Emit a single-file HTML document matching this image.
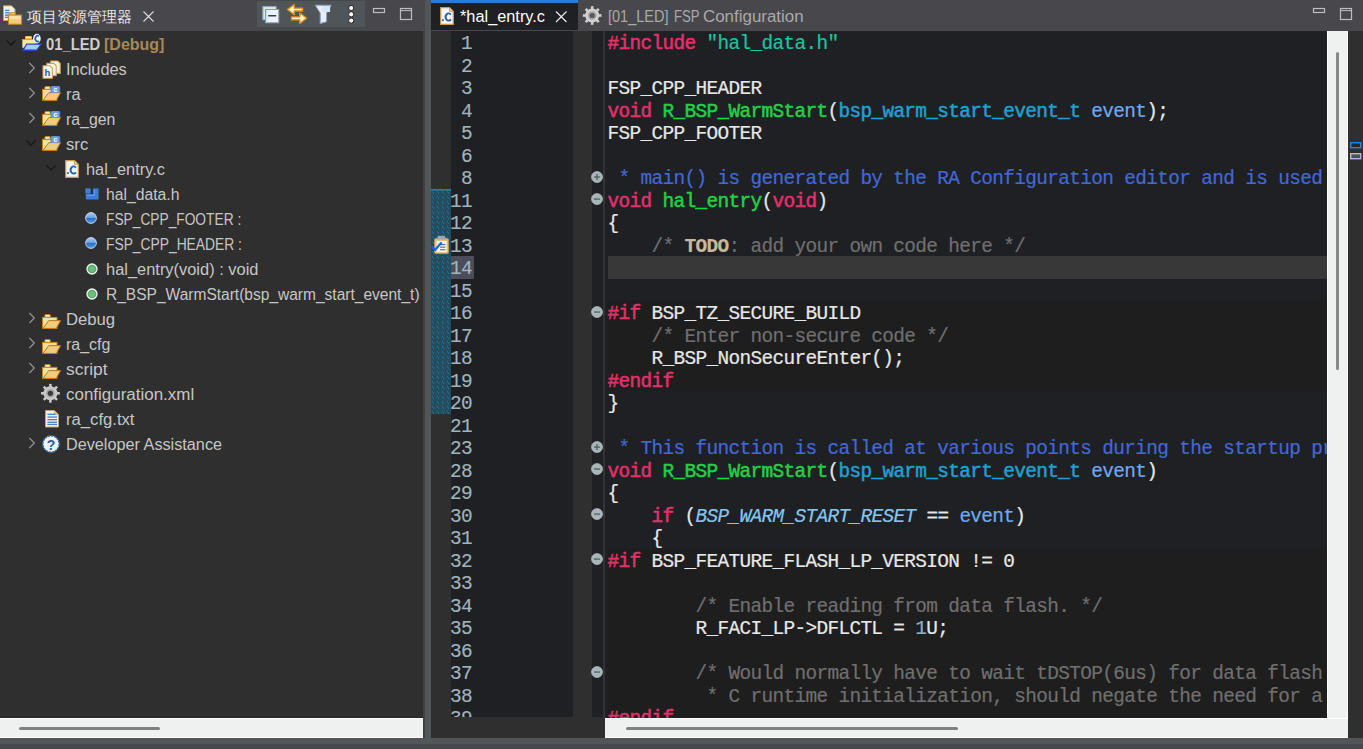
<!DOCTYPE html>
<html><head><meta charset="utf-8"><style>
html,body{margin:0;padding:0;width:1363px;height:749px;overflow:hidden;background:#48484c;}
body{position:relative;font-family:"Liberation Sans",sans-serif;}
.t{position:absolute;white-space:pre;}
.code{font-family:"Liberation Mono",monospace;font-size:19.4px;letter-spacing:-0.6417px;-webkit-text-stroke:0.2px currentColor;}
.b{-webkit-text-stroke:0.5px currentColor;}
</style></head><body>
<div style="position:absolute;left:0px;top:0px;width:1363px;height:749px;background:#48484c;"></div>
<div style="position:absolute;left:0px;top:31px;width:423px;height:687px;background:#2f2f2f;"></div>
<div style="position:absolute;left:0px;top:717px;width:423px;height:1px;background:#262626;"></div>
<div style="position:absolute;left:0px;top:718px;width:423px;height:20px;background:#eff1f0;border-top:1px solid #fff;border-bottom:1px solid #fff;box-sizing:border-box;"></div>
<div style="position:absolute;left:19px;top:727px;width:141px;height:3px;background:#808080;border-radius:2px;"></div>
<div style="position:absolute;left:423px;top:31px;width:2px;height:707px;background:#3e4043;"></div>
<div style="position:absolute;left:425px;top:0px;width:6px;height:738px;background:#515659;"></div>
<div style="position:absolute;left:0px;top:738px;width:1363px;height:6px;background:#515659;"></div>
<div style="position:absolute;left:431px;top:31px;width:932px;height:707px;background:#2f2f2f;"></div>
<div style="position:absolute;left:451px;top:31px;width:122px;height:686px;background:#1f2023;"></div>
<div style="position:absolute;left:592px;top:31px;width:11px;height:686px;background:#1f2023;"></div>
<div style="position:absolute;left:603px;top:31px;width:2px;height:686px;background:#343434;"></div>
<div style="position:absolute;left:605px;top:31px;width:722px;height:687px;background:#1f2023;"></div>
<div style="position:absolute;left:608px;top:301.0px;width:719px;height:90.0px;background:#1e1e1e;"></div>
<div style="position:absolute;left:608px;top:548.5px;width:719px;height:169.5px;background:#1e1e1e;"></div>
<div style="position:absolute;left:608px;top:256.0px;width:719px;height:22.5px;background:#383838;"></div>
<div style="position:absolute;left:451px;top:256.0px;width:23px;height:22.5px;background:#4b4d5a;"></div>
<svg style="position:absolute;left:431px;top:188.5px;" width="20" height="225.0" viewBox="0 0 20 225.0"><defs><pattern id="qd" x="0" y="0.5" width="5" height="5" patternUnits="userSpaceOnUse"><rect width="5" height="5" fill="#214f60"/><rect x="1" y="2" width="1" height="1" fill="#1d8fb4"/><rect x="2" y="3" width="1" height="1" fill="#1d8fb4"/><rect x="2" y="2" width="1" height="1" fill="#2a3358"/><rect x="1" y="3" width="1" height="1" fill="#2a3358"/><rect x="4" y="0" width="1" height="1" fill="#2a4a5e"/><rect x="3" y="4" width="1" height="1" fill="#2a4a5e"/></pattern></defs><rect width="20" height="225.0" fill="url(#qd)"/><rect width="20" height="1.6" fill="#1f86a8"/></svg>
<div style="position:absolute;left:1327px;top:31px;width:21px;height:707px;background:#eff1f0;border-left:1px solid #fff;border-right:1px solid #fff;box-sizing:border-box;"></div>
<div style="position:absolute;left:605px;top:718px;width:743px;height:20px;background:#eff1f0;border-top:1px solid #fff;border-bottom:1px solid #fff;box-sizing:border-box;"></div>
<div style="position:absolute;left:1336px;top:52px;width:3px;height:318px;background:#888;border-radius:2px;"></div>
<div style="position:absolute;left:626px;top:727px;width:332px;height:3px;background:#808080;border-radius:2px;"></div>
<svg style="position:absolute;left:1349px;top:141px" width="14" height="20" viewBox="0 0 14 20"><rect x="1.7" y="1.7" width="10" height="5" fill="#1b2b36" stroke="#2a84dc" stroke-width="1.4"/><rect x="1.7" y="12.7" width="10" height="5" fill="#4c5252" stroke="#bab4dc" stroke-width="1.4"/></svg>
<div style="position:absolute;left:431px;top:0px;width:147px;height:3px;background:#2b7bd6;"></div>
<div style="position:absolute;left:431px;top:3px;width:147px;height:27px;background:#1f2023;"></div>
<div style="position:absolute;left:605px;top:31px;width:722px;height:687px;overflow:hidden;"><div style="position:absolute;left:-605px;top:-31px;width:1363px;height:749px;"><div class="t code" style="left:607.5px;top:33.0px;height:22.5px;line-height:22.5px;"><span class="b" style="color:#e4306a;">#include</span><span style="color:#e8e8e8;"> </span><span style="color:#1cc3a0;">&quot;hal_data.h&quot;</span></div>
<div class="t code" style="left:607.5px;top:55.5px;height:22.5px;line-height:22.5px;"></div>
<div class="t code" style="left:607.5px;top:78.0px;height:22.5px;line-height:22.5px;"><span style="color:#e8e8e8;">FSP_CPP_HEADER</span></div>
<div class="t code" style="left:607.5px;top:100.5px;height:22.5px;line-height:22.5px;"><span class="b" style="color:#e4306a;">void</span><span style="color:#e8e8e8;"> </span><span class="b" style="color:#1ed246;">R_BSP_WarmStart</span><span style="color:#e8e8e8;">(</span><span class="b" style="color:#1ea0d0;">bsp_warm_start_event_t</span><span style="color:#e8e8e8;"> </span><span style="color:#6eaaf5;">event</span><span style="color:#e8e8e8;">);</span></div>
<div class="t code" style="left:607.5px;top:123.0px;height:22.5px;line-height:22.5px;"><span style="color:#e8e8e8;">FSP_CPP_FOOTER</span></div>
<div class="t code" style="left:607.5px;top:145.5px;height:22.5px;line-height:22.5px;"></div>
<div class="t code" style="left:607.5px;top:168.0px;height:22.5px;line-height:22.5px;"><span style="color:#4169d6;"> * main() is generated by the RA Configuration editor and is used to generate threads if an RTOS is used.</span></div>
<div class="t code" style="left:607.5px;top:190.5px;height:22.5px;line-height:22.5px;"><span class="b" style="color:#e4306a;">void</span><span style="color:#e8e8e8;"> </span><span class="b" style="color:#1ed246;">hal_entry</span><span style="color:#e8e8e8;">(</span><span class="b" style="color:#e4306a;">void</span><span style="color:#e8e8e8;">)</span></div>
<div class="t code" style="left:607.5px;top:213.0px;height:22.5px;line-height:22.5px;"><span style="color:#e8e8e8;">{</span></div>
<div class="t code" style="left:607.5px;top:235.5px;height:22.5px;line-height:22.5px;"><span style="color:#6f6f6f;">    /* </span><span style="color:#c9b99c;font-weight:bold;">TODO</span><span style="color:#6f6f6f;">: add your own code here */</span></div>
<div class="t code" style="left:607.5px;top:258.0px;height:22.5px;line-height:22.5px;"></div>
<div class="t code" style="left:607.5px;top:280.5px;height:22.5px;line-height:22.5px;"></div>
<div class="t code" style="left:607.5px;top:303.0px;height:22.5px;line-height:22.5px;"><span class="b" style="color:#e4306a;">#if</span><span style="color:#e8e8e8;"> BSP_TZ_SECURE_BUILD</span></div>
<div class="t code" style="left:607.5px;top:325.5px;height:22.5px;line-height:22.5px;"><span style="color:#6f6f6f;">    /* Enter non-secure code */</span></div>
<div class="t code" style="left:607.5px;top:348.0px;height:22.5px;line-height:22.5px;"><span style="color:#e8e8e8;">    R_BSP_NonSecureEnter();</span></div>
<div class="t code" style="left:607.5px;top:370.5px;height:22.5px;line-height:22.5px;"><span class="b" style="color:#e4306a;">#endif</span></div>
<div class="t code" style="left:607.5px;top:393.0px;height:22.5px;line-height:22.5px;"><span style="color:#e8e8e8;">}</span></div>
<div class="t code" style="left:607.5px;top:415.5px;height:22.5px;line-height:22.5px;"></div>
<div class="t code" style="left:607.5px;top:438.0px;height:22.5px;line-height:22.5px;"><span style="color:#4169d6;"> * This function is called at various points during the startup process.  This implementation uses the event</span></div>
<div class="t code" style="left:607.5px;top:460.5px;height:22.5px;line-height:22.5px;"><span class="b" style="color:#e4306a;">void</span><span style="color:#e8e8e8;"> </span><span class="b" style="color:#1ed246;">R_BSP_WarmStart</span><span style="color:#e8e8e8;">(</span><span class="b" style="color:#1ea0d0;">bsp_warm_start_event_t</span><span style="color:#e8e8e8;"> </span><span style="color:#6eaaf5;">event</span><span style="color:#e8e8e8;">)</span></div>
<div class="t code" style="left:607.5px;top:483.0px;height:22.5px;line-height:22.5px;"><span style="color:#e8e8e8;">{</span></div>
<div class="t code" style="left:607.5px;top:505.5px;height:22.5px;line-height:22.5px;"><span style="color:#e8e8e8;">    </span><span class="b" style="color:#e4306a;">if</span><span style="color:#e8e8e8;"> (</span><span style="color:#86c6ee;font-style:italic;">BSP_WARM_START_RESET</span><span style="color:#e8e8e8;"> == </span><span style="color:#6eaaf5;">event</span><span style="color:#e8e8e8;">)</span></div>
<div class="t code" style="left:607.5px;top:528.0px;height:22.5px;line-height:22.5px;"><span style="color:#e8e8e8;">    {</span></div>
<div class="t code" style="left:607.5px;top:550.5px;height:22.5px;line-height:22.5px;"><span class="b" style="color:#e4306a;">#if</span><span style="color:#e8e8e8;"> BSP_FEATURE_FLASH_LP_VERSION != 0</span></div>
<div class="t code" style="left:607.5px;top:573.0px;height:22.5px;line-height:22.5px;"></div>
<div class="t code" style="left:607.5px;top:595.5px;height:22.5px;line-height:22.5px;"><span style="color:#6f6f6f;">        /* Enable reading from data flash. */</span></div>
<div class="t code" style="left:607.5px;top:618.0px;height:22.5px;line-height:22.5px;"><span style="color:#e8e8e8;">        R_FACI_LP-&gt;DFLCTL = </span><span style="color:#8eaec0;">1</span><span style="color:#e8e8e8;">U;</span></div>
<div class="t code" style="left:607.5px;top:640.5px;height:22.5px;line-height:22.5px;"></div>
<div class="t code" style="left:607.5px;top:663.0px;height:22.5px;line-height:22.5px;"><span style="color:#6f6f6f;">        /* Would normally have to wait tDSTOP(6us) for data flash recovery. Placing the enable here, before</span></div>
<div class="t code" style="left:607.5px;top:685.5px;height:22.5px;line-height:22.5px;"><span style="color:#6f6f6f;">         * C runtime initialization, should negate the need for a delay since the initialization will typically take more than 6us.</span></div>
<div class="t code" style="left:607.5px;top:708.0px;height:22.5px;line-height:22.5px;"><span class="b" style="color:#e4306a;">#endif</span></div>
</div></div>
<div style="position:absolute;left:451px;top:31px;width:122px;height:686px;overflow:hidden;"><div style="position:absolute;left:-451px;top:-31px;width:1363px;height:749px;"><div class="t code" style="-webkit-text-stroke:0.15px currentColor;left:400px;width:72px;text-align:right;top:33.0px;height:22.5px;line-height:22.5px;color:#a0b4bc;">1</div>
<div class="t code" style="-webkit-text-stroke:0.15px currentColor;left:400px;width:72px;text-align:right;top:55.5px;height:22.5px;line-height:22.5px;color:#a0b4bc;">2</div>
<div class="t code" style="-webkit-text-stroke:0.15px currentColor;left:400px;width:72px;text-align:right;top:78.0px;height:22.5px;line-height:22.5px;color:#a0b4bc;">3</div>
<div class="t code" style="-webkit-text-stroke:0.15px currentColor;left:400px;width:72px;text-align:right;top:100.5px;height:22.5px;line-height:22.5px;color:#a0b4bc;">4</div>
<div class="t code" style="-webkit-text-stroke:0.15px currentColor;left:400px;width:72px;text-align:right;top:123.0px;height:22.5px;line-height:22.5px;color:#a0b4bc;">5</div>
<div class="t code" style="-webkit-text-stroke:0.15px currentColor;left:400px;width:72px;text-align:right;top:145.5px;height:22.5px;line-height:22.5px;color:#a0b4bc;">6</div>
<div class="t code" style="-webkit-text-stroke:0.15px currentColor;left:400px;width:72px;text-align:right;top:168.0px;height:22.5px;line-height:22.5px;color:#a0b4bc;">8</div>
<div class="t code" style="-webkit-text-stroke:0.15px currentColor;left:400px;width:72px;text-align:right;top:190.5px;height:22.5px;line-height:22.5px;color:#a0b4bc;">11</div>
<div class="t code" style="-webkit-text-stroke:0.15px currentColor;left:400px;width:72px;text-align:right;top:213.0px;height:22.5px;line-height:22.5px;color:#a0b4bc;">12</div>
<div class="t code" style="-webkit-text-stroke:0.15px currentColor;left:400px;width:72px;text-align:right;top:235.5px;height:22.5px;line-height:22.5px;color:#a0b4bc;">13</div>
<div class="t code" style="-webkit-text-stroke:0.15px currentColor;left:400px;width:72px;text-align:right;top:258.0px;height:22.5px;line-height:22.5px;color:#a0b4bc;">14</div>
<div class="t code" style="-webkit-text-stroke:0.15px currentColor;left:400px;width:72px;text-align:right;top:280.5px;height:22.5px;line-height:22.5px;color:#a0b4bc;">15</div>
<div class="t code" style="-webkit-text-stroke:0.15px currentColor;left:400px;width:72px;text-align:right;top:303.0px;height:22.5px;line-height:22.5px;color:#a0b4bc;">16</div>
<div class="t code" style="-webkit-text-stroke:0.15px currentColor;left:400px;width:72px;text-align:right;top:325.5px;height:22.5px;line-height:22.5px;color:#a0b4bc;">17</div>
<div class="t code" style="-webkit-text-stroke:0.15px currentColor;left:400px;width:72px;text-align:right;top:348.0px;height:22.5px;line-height:22.5px;color:#a0b4bc;">18</div>
<div class="t code" style="-webkit-text-stroke:0.15px currentColor;left:400px;width:72px;text-align:right;top:370.5px;height:22.5px;line-height:22.5px;color:#a0b4bc;">19</div>
<div class="t code" style="-webkit-text-stroke:0.15px currentColor;left:400px;width:72px;text-align:right;top:393.0px;height:22.5px;line-height:22.5px;color:#a0b4bc;">20</div>
<div class="t code" style="-webkit-text-stroke:0.15px currentColor;left:400px;width:72px;text-align:right;top:415.5px;height:22.5px;line-height:22.5px;color:#a0b4bc;">21</div>
<div class="t code" style="-webkit-text-stroke:0.15px currentColor;left:400px;width:72px;text-align:right;top:438.0px;height:22.5px;line-height:22.5px;color:#a0b4bc;">23</div>
<div class="t code" style="-webkit-text-stroke:0.15px currentColor;left:400px;width:72px;text-align:right;top:460.5px;height:22.5px;line-height:22.5px;color:#a0b4bc;">28</div>
<div class="t code" style="-webkit-text-stroke:0.15px currentColor;left:400px;width:72px;text-align:right;top:483.0px;height:22.5px;line-height:22.5px;color:#a0b4bc;">29</div>
<div class="t code" style="-webkit-text-stroke:0.15px currentColor;left:400px;width:72px;text-align:right;top:505.5px;height:22.5px;line-height:22.5px;color:#a0b4bc;">30</div>
<div class="t code" style="-webkit-text-stroke:0.15px currentColor;left:400px;width:72px;text-align:right;top:528.0px;height:22.5px;line-height:22.5px;color:#a0b4bc;">31</div>
<div class="t code" style="-webkit-text-stroke:0.15px currentColor;left:400px;width:72px;text-align:right;top:550.5px;height:22.5px;line-height:22.5px;color:#a0b4bc;">32</div>
<div class="t code" style="-webkit-text-stroke:0.15px currentColor;left:400px;width:72px;text-align:right;top:573.0px;height:22.5px;line-height:22.5px;color:#a0b4bc;">33</div>
<div class="t code" style="-webkit-text-stroke:0.15px currentColor;left:400px;width:72px;text-align:right;top:595.5px;height:22.5px;line-height:22.5px;color:#a0b4bc;">34</div>
<div class="t code" style="-webkit-text-stroke:0.15px currentColor;left:400px;width:72px;text-align:right;top:618.0px;height:22.5px;line-height:22.5px;color:#a0b4bc;">35</div>
<div class="t code" style="-webkit-text-stroke:0.15px currentColor;left:400px;width:72px;text-align:right;top:640.5px;height:22.5px;line-height:22.5px;color:#a0b4bc;">36</div>
<div class="t code" style="-webkit-text-stroke:0.15px currentColor;left:400px;width:72px;text-align:right;top:663.0px;height:22.5px;line-height:22.5px;color:#a0b4bc;">37</div>
<div class="t code" style="-webkit-text-stroke:0.15px currentColor;left:400px;width:72px;text-align:right;top:685.5px;height:22.5px;line-height:22.5px;color:#a0b4bc;">38</div>
<div class="t code" style="-webkit-text-stroke:0.15px currentColor;left:400px;width:72px;text-align:right;top:708.0px;height:22.5px;line-height:22.5px;color:#a0b4bc;">39</div>
</div></div>
<div class="t" style="left:46px;top:33px;height:24px;line-height:24px;font-size:16px;font-weight:bold;color:#cfcfcf;transform:scaleX(0.925);transform-origin:0 0;">01_LED</div>
<div class="t" style="left:104px;top:33px;height:24px;line-height:24px;font-size:16px;font-weight:bold;color:#a8875a;">[Debug]</div>
<div class="t" style="left:66px;top:58px;height:24px;line-height:24px;font-size:16px;color:#c6c6c6;transform:scaleX(1.0191);transform-origin:0 0;">Includes</div>
<div class="t" style="left:66px;top:83px;height:24px;line-height:24px;font-size:16px;color:#c6c6c6;transform:scaleX(1.0210);transform-origin:0 0;">ra</div>
<div class="t" style="left:66px;top:108px;height:24px;line-height:24px;font-size:16px;color:#c6c6c6;transform:scaleX(0.9911);transform-origin:0 0;">ra_gen</div>
<div class="t" style="left:66px;top:133px;height:24px;line-height:24px;font-size:16px;color:#c6c6c6;transform:scaleX(1.0437);transform-origin:0 0;">src</div>
<div class="t" style="left:86px;top:158px;height:24px;line-height:24px;font-size:16px;color:#c6c6c6;transform:scaleX(1.0240);transform-origin:0 0;">hal_entry.c</div>
<div class="t" style="left:106px;top:183px;height:24px;line-height:24px;font-size:16px;color:#c6c6c6;transform:scaleX(0.9819);transform-origin:0 0;">hal_data.h</div>
<div class="t" style="left:106px;top:208px;height:24px;line-height:24px;font-size:16px;color:#c6c6c6;transform:scaleX(0.8591);transform-origin:0 0;">FSP_CPP_FOOTER :</div>
<div class="t" style="left:106px;top:233px;height:24px;line-height:24px;font-size:16px;color:#c6c6c6;transform:scaleX(0.8635);transform-origin:0 0;">FSP_CPP_HEADER :</div>
<div class="t" style="left:106px;top:258px;height:24px;line-height:24px;font-size:16px;color:#c6c6c6;transform:scaleX(1.0264);transform-origin:0 0;">hal_entry(void) : void</div>
<div class="t" style="left:106px;top:283px;height:24px;line-height:24px;font-size:16px;color:#c6c6c6;transform:scaleX(0.9705);transform-origin:0 0;">R_BSP_WarmStart(bsp_warm_start_event_t)</div>
<div class="t" style="left:66px;top:308px;height:24px;line-height:24px;font-size:16px;color:#c6c6c6;transform:scaleX(1.0424);transform-origin:0 0;">Debug</div>
<div class="t" style="left:66px;top:333px;height:24px;line-height:24px;font-size:16px;color:#c6c6c6;transform:scaleX(0.9984);transform-origin:0 0;">ra_cfg</div>
<div class="t" style="left:66px;top:358px;height:24px;line-height:24px;font-size:16px;color:#c6c6c6;transform:scaleX(1.0861);transform-origin:0 0;">script</div>
<div class="t" style="left:66px;top:383px;height:24px;line-height:24px;font-size:16px;color:#c6c6c6;transform:scaleX(1.0598);transform-origin:0 0;">configuration.xml</div>
<div class="t" style="left:66px;top:408px;height:24px;line-height:24px;font-size:16px;color:#c6c6c6;transform:scaleX(1.0402);transform-origin:0 0;">ra_cfg.txt</div>
<div class="t" style="left:66px;top:433px;height:24px;line-height:24px;font-size:16px;color:#c6c6c6;transform:scaleX(1.0140);transform-origin:0 0;">Developer Assistance</div>
<div class="t" style="left:460px;top:5px;height:24px;line-height:24px;font-size:16px;color:#ffffff;transform:scaleX(1.02);transform-origin:0 0;">*hal_entry.c</div>
<div class="t" style="left:607.8000000000001px;top:5px;height:24px;line-height:24px;font-size:16px;color:#a9a9a9;transform:scaleX(0.9076);transform-origin:0 0;">[01_LED]</div>
<div class="t" style="left:673.8000000000001px;top:5px;height:24px;line-height:24px;font-size:16px;color:#a9a9a9;transform:scaleX(0.8198);transform-origin:0 0;">FSP</div>
<div class="t" style="left:703.2px;top:5px;height:24px;line-height:24px;font-size:16px;color:#a9a9a9;transform:scaleX(1.0570);transform-origin:0 0;">Configuration</div>
<div class="t" style="left:27px;top:5px;height:24px;line-height:24px;font-size:15px;color:#e6e6e6;">项目资源管理器</div>
<svg style="position:absolute;left:0px;top:0px;" width="24" height="26" viewBox="0 0 24 26"><path d="M3.5,5.8 H11.5 L15,9.3 V20.5 H3.5 Z" fill="#eef2f8" stroke="#c8a060" stroke-width="1"/><rect x="5" y="9.700000000000001" width="4.6" height="1.4" fill="#4f86d0"/><rect x="5" y="12.100000000000001" width="4.6" height="1.4" fill="#4f86d0"/><rect x="5" y="14.5" width="4.6" height="1.4" fill="#4f86d0"/><rect x="5" y="16.7" width="4.6" height="1.4" fill="#4f86d0"/><rect x="9.6" y="12.6" width="5.6" height="3" rx="0.6" fill="#f0c36c" stroke="#c0832a" stroke-width="0.8"/><rect x="8.4" y="15" width="13.2" height="9.2" fill="#f3cd78" stroke="#bf842c" stroke-width="1"/><rect x="9.4" y="16" width="11.2" height="3.2" fill="#f8e0a4"/></svg>
<svg style="position:absolute;left:142px;top:10px;" width="13" height="13" viewBox="0 0 13 13"><path d="M1.5,1.5 L11.5,11.5 M11.5,1.5 L1.5,11.5" stroke="#dcdcdc" stroke-width="1.1"/></svg>
<div style="position:absolute;left:257px;top:1px;width:108px;height:26px;background:#50555a;"></div>
<svg style="position:absolute;left:257.8px;top:0px;" width="24" height="26" viewBox="0 0 24 26"><rect x="4.9" y="6.6" width="13.2" height="13.2" fill="#dde6f0" stroke="#9aa8bc" stroke-width="1"/><rect x="7.5" y="9.5" width="13.3" height="13.3" fill="#eef1f4" stroke="#8a9ab2" stroke-width="1"/><rect x="8" y="10" width="1.4" height="12.4" fill="#b8ecf8"/><rect x="10" y="14.9" width="8.4" height="1.7" rx="0.8" fill="#1c3c94"/></svg>
<svg style="position:absolute;left:0px;top:0px;" width="320" height="28" viewBox="0 0 320 28"><path d="M287.5,9.6 L294.2,4.5 V8.2 H302.6 V11 H294.2 V14.8 Z" fill="#fff3c4" stroke="#d8901e" stroke-width="1.3" stroke-linejoin="round"/><path d="M306.6,18.3 L299.8,12.8 V16.9 H291.4 V19.8 H299.8 V23.6 Z" fill="#fff3c4" stroke="#d8901e" stroke-width="1.3" stroke-linejoin="round"/></svg>
<svg style="position:absolute;left:0px;top:0px;" width="340" height="28" viewBox="0 0 340 28"><path d="M315.2,5.2 H331.2 L326.6,13 V21.8 L320.2,23.6 V13 Z" fill="#e6eef8" stroke="#8a9ab4" stroke-width="1"/><rect x="322.6" y="6" width="7.5" height="6" fill="#d6e6f6"/></svg>
<svg style="position:absolute;left:0px;top:0px;" width="360" height="28" viewBox="0 0 360 28"><circle cx="351.2" cy="8" r="2.6" fill="#ffffff" stroke="#202020" stroke-width="1"/><circle cx="351.2" cy="14.3" r="2.6" fill="#ffffff" stroke="#202020" stroke-width="1"/><circle cx="351.2" cy="20.6" r="2.6" fill="#ffffff" stroke="#202020" stroke-width="1"/></svg>
<svg style="position:absolute;left:372px;top:7px;" width="14" height="8" viewBox="0 0 14 8"><rect x="1.5" y="1.5" width="11" height="4" fill="none" stroke="#bdbdbd" stroke-width="1.2"/></svg>
<svg style="position:absolute;left:399px;top:7px;" width="14" height="14" viewBox="0 0 14 14"><rect x="1.5" y="1.5" width="11" height="11" fill="none" stroke="#bdbdbd" stroke-width="1.2"/><line x1="1.5" y1="3.6" x2="12.5" y2="3.6" stroke="#bdbdbd" stroke-width="1"/></svg>
<svg style="position:absolute;left:1312px;top:7px;" width="14" height="8" viewBox="0 0 14 8"><rect x="1.5" y="1.5" width="11" height="4" fill="none" stroke="#bdbdbd" stroke-width="1.2"/></svg>
<svg style="position:absolute;left:1339px;top:7px;" width="14" height="14" viewBox="0 0 14 14"><rect x="1.5" y="1.5" width="11" height="11" fill="none" stroke="#bdbdbd" stroke-width="1.2"/><line x1="1.5" y1="3.6" x2="12.5" y2="3.6" stroke="#bdbdbd" stroke-width="1"/></svg>
<svg style="position:absolute;left:440px;top:7px;" width="14" height="18" viewBox="0 0 14 18"><path d="M0.7,0.7 H9.5 L13.3,4.5 V17.3 H0.7 Z" fill="#f4f6fa" stroke="#c89b50" stroke-width="1.2"/><path d="M9.5,0.7 V4.5 H13.3" fill="#e8c890" stroke="#c89b50" stroke-width="0.8"/><path d="M10.9,7.6 A3,3.6 0 1 0 10.9,12.4" fill="none" stroke="#2a62a4" stroke-width="1.9"/><rect x="2" y="12.2" width="1.9" height="1.7" fill="#2a62a4"/></svg>
<svg style="position:absolute;left:554px;top:10px;" width="14" height="14" viewBox="0 0 14 14"><path d="M2,1.5 L12.5,12 M12.5,1.5 L2,12" stroke="#f0f0f0" stroke-width="1.1"/></svg>
<svg style="position:absolute;left:0px;top:0px;" width="610" height="31" viewBox="0 0 610 31"><g transform="translate(592.2,15.5)"><rect x="-1.3" y="-9.3" width="2.6" height="9.3" fill="#cfcfcf" transform="rotate(0.0)"/><rect x="-1.3" y="-9.3" width="2.6" height="9.3" fill="#cfcfcf" transform="rotate(45.0)"/><rect x="-1.3" y="-9.3" width="2.6" height="9.3" fill="#cfcfcf" transform="rotate(90.0)"/><rect x="-1.3" y="-9.3" width="2.6" height="9.3" fill="#cfcfcf" transform="rotate(135.0)"/><rect x="-1.3" y="-9.3" width="2.6" height="9.3" fill="#cfcfcf" transform="rotate(180.0)"/><rect x="-1.3" y="-9.3" width="2.6" height="9.3" fill="#cfcfcf" transform="rotate(225.0)"/><rect x="-1.3" y="-9.3" width="2.6" height="9.3" fill="#cfcfcf" transform="rotate(270.0)"/><rect x="-1.3" y="-9.3" width="2.6" height="9.3" fill="#cfcfcf" transform="rotate(315.0)"/><circle r="7.0" fill="#cfcfcf"/><circle r="4.2" fill="#a4a4a4"/><circle r="2.6" fill="#5a5a5a"/></g></svg>
<svg style="position:absolute;left:4.5px;top:39px;" width="12" height="8" viewBox="0 0 12 8"><polyline points="1.5,1.5 6,6 10.5,1.5" fill="none" stroke="#161616" stroke-width="1.3"/></svg>
<svg style="position:absolute;left:21px;top:33px;" width="22" height="19" viewBox="0 0 22 19"><rect x="4" y="3" width="7" height="3.6" rx="1" fill="#eab35a"/><rect x="5" y="3.8" width="5" height="1.3" fill="#fff8e0"/><rect x="1.5" y="6.6" width="13" height="8" fill="#fbe6a8" stroke="#d8b070" stroke-width="0.6"/><polygon points="5.6,11.2 20.2,11.2 15.6,17.4 2,17.4" fill="#9fd2f4" stroke="#2a4ac8" stroke-width="1.2"/><rect x="2" y="16.6" width="13.6" height="1.5" fill="#2c3cc0"/><ellipse cx="15.9" cy="5.6" rx="3.8" ry="4.9" fill="#f4f8fc"/><path d="M17.8,3.3 A2.2,2.9 0 1 0 17.8,7.9" fill="none" stroke="#2a66b8" stroke-width="1.8"/></svg>
<svg style="position:absolute;left:27.6px;top:62px;" width="8" height="12" viewBox="0 0 8 12"><polyline points="1.3,0.9 6.3,6 1.3,11.1" fill="none" stroke="#939393" stroke-width="1.3"/></svg>
<svg style="position:absolute;left:42px;top:60px;" width="20" height="19" viewBox="0 0 20 19"><path d="M8.799999999999999,1.0 H15.799999999999999 L18.2,3.4 V13.4 H8.799999999999999 Z" fill="#f2f4f8" stroke="#d2a050" stroke-width="1.1"/><path d="M4.8,3.4 H11.8 L14.2,5.8 V15.8 H4.8 Z" fill="#f2f4f8" stroke="#d2a050" stroke-width="1.1"/><path d="M1.0,5.8 H8.0 L10.4,8.2 V18.2 H1.0 Z" fill="#f2f4f8" stroke="#d2a050" stroke-width="1.1"/><text x="5.5" y="16.2" font-size="9.5" font-family="Liberation Sans" font-weight="bold" fill="#2a5a98" text-anchor="middle">h</text></svg>
<svg style="position:absolute;left:27.6px;top:87px;" width="8" height="12" viewBox="0 0 8 12"><polyline points="1.3,0.9 6.3,6 1.3,11.1" fill="none" stroke="#939393" stroke-width="1.3"/></svg>
<svg style="position:absolute;left:42px;top:86.3px;" width="20" height="16" viewBox="0 0 20 16"><rect x="2.8" y="0.6" width="5.6" height="3.4" rx="0.8" fill="#efbd68" stroke="#c58a2c" stroke-width="0.8"/><rect x="3.6" y="1.2" width="3.6" height="1.4" fill="#fff6dc"/><rect x="0.5" y="3.4" width="14.5" height="10.8" fill="#f7dfa2" stroke="#c08428" stroke-width="1"/><polygon points="6.8,6.6 18.6,6.6 14.2,14.4 1,14.4" fill="#f2cc7c" stroke="#b87a20" stroke-width="1"/><path d="M9,7 V1.6 Q9,0 10.6,0 H16.4 Q17.8,0 17.8,1.6 V6.6" fill="#6e9fe0" stroke="#5080c8" stroke-width="0.8"/><text x="13.4" y="6.2" font-size="7" font-family="Liberation Sans" font-weight="bold" fill="#ffffff" text-anchor="middle">c</text></svg>
<svg style="position:absolute;left:27.6px;top:112px;" width="8" height="12" viewBox="0 0 8 12"><polyline points="1.3,0.9 6.3,6 1.3,11.1" fill="none" stroke="#939393" stroke-width="1.3"/></svg>
<svg style="position:absolute;left:42px;top:111.3px;" width="20" height="16" viewBox="0 0 20 16"><rect x="2.8" y="0.6" width="5.6" height="3.4" rx="0.8" fill="#efbd68" stroke="#c58a2c" stroke-width="0.8"/><rect x="3.6" y="1.2" width="3.6" height="1.4" fill="#fff6dc"/><rect x="0.5" y="3.4" width="14.5" height="10.8" fill="#f7dfa2" stroke="#c08428" stroke-width="1"/><polygon points="6.8,6.6 18.6,6.6 14.2,14.4 1,14.4" fill="#f2cc7c" stroke="#b87a20" stroke-width="1"/><path d="M9,7 V1.6 Q9,0 10.6,0 H16.4 Q17.8,0 17.8,1.6 V6.6" fill="#6e9fe0" stroke="#5080c8" stroke-width="0.8"/><text x="13.4" y="6.2" font-size="7" font-family="Liberation Sans" font-weight="bold" fill="#ffffff" text-anchor="middle">c</text></svg>
<svg style="position:absolute;left:24.5px;top:138.5px;" width="12" height="8" viewBox="0 0 12 8"><polyline points="1.5,1.5 6,6 10.5,1.5" fill="none" stroke="#161616" stroke-width="1.3"/></svg>
<svg style="position:absolute;left:42px;top:136.3px;" width="20" height="16" viewBox="0 0 20 16"><rect x="2.8" y="0.6" width="5.6" height="3.4" rx="0.8" fill="#efbd68" stroke="#c58a2c" stroke-width="0.8"/><rect x="3.6" y="1.2" width="3.6" height="1.4" fill="#fff6dc"/><rect x="0.5" y="3.4" width="14.5" height="10.8" fill="#f7dfa2" stroke="#c08428" stroke-width="1"/><polygon points="6.8,6.6 18.6,6.6 14.2,14.4 1,14.4" fill="#f2cc7c" stroke="#b87a20" stroke-width="1"/><path d="M9,7 V1.6 Q9,0 10.6,0 H16.4 Q17.8,0 17.8,1.6 V6.6" fill="#6e9fe0" stroke="#5080c8" stroke-width="0.8"/><text x="13.4" y="6.2" font-size="7" font-family="Liberation Sans" font-weight="bold" fill="#ffffff" text-anchor="middle">c</text></svg>
<svg style="position:absolute;left:44.5px;top:163.5px;" width="12" height="8" viewBox="0 0 12 8"><polyline points="1.5,1.5 6,6 10.5,1.5" fill="none" stroke="#161616" stroke-width="1.3"/></svg>
<svg style="position:absolute;left:65px;top:160px;" width="14" height="18" viewBox="0 0 14 18"><path d="M0.7,0.7 H9.5 L13.3,4.5 V17.3 H0.7 Z" fill="#f4f6fa" stroke="#c89b50" stroke-width="1.2"/><path d="M9.5,0.7 V4.5 H13.3" fill="#e8c890" stroke="#c89b50" stroke-width="0.8"/><path d="M10.9,7.6 A3,3.6 0 1 0 10.9,12.4" fill="none" stroke="#2a62a4" stroke-width="1.9"/><rect x="2" y="12.2" width="1.9" height="1.7" fill="#2a62a4"/></svg>
<svg style="position:absolute;left:85px;top:188px;" width="14" height="12" viewBox="0 0 14 12"><rect x="0.4" y="0.4" width="5.2" height="5.2" fill="#3e83d2"/><path d="M8,0.4 H13.6 V11.6 H0.8 V6 H8 Z" fill="#3a7fd0"/><path d="M9.5,1.8 V7.4 H2.2" fill="none" stroke="#6aa6e6" stroke-width="0.8"/></svg>
<svg style="position:absolute;left:84.5px;top:212.4px;" width="12" height="12" viewBox="0 0 12 12"><defs><linearGradient id="mg" x1="0" y1="0" x2="0" y2="1"><stop offset="0" stop-color="#a8cdf2"/><stop offset="0.45" stop-color="#6aa4e4"/><stop offset="0.5" stop-color="#1f6ec4"/><stop offset="0.6" stop-color="#2a78cc"/><stop offset="1" stop-color="#5a9ade"/></linearGradient></defs><circle cx="6" cy="6" r="5.4" fill="url(#mg)" stroke="#dfeaf6" stroke-width="0.8"/></svg>
<svg style="position:absolute;left:84.5px;top:237.4px;" width="12" height="12" viewBox="0 0 12 12"><defs><linearGradient id="mg" x1="0" y1="0" x2="0" y2="1"><stop offset="0" stop-color="#a8cdf2"/><stop offset="0.45" stop-color="#6aa4e4"/><stop offset="0.5" stop-color="#1f6ec4"/><stop offset="0.6" stop-color="#2a78cc"/><stop offset="1" stop-color="#5a9ade"/></linearGradient></defs><circle cx="6" cy="6" r="5.4" fill="url(#mg)" stroke="#dfeaf6" stroke-width="0.8"/></svg>
<svg style="position:absolute;left:85.6px;top:263.4px;" width="12" height="12" viewBox="0 0 12 12"><circle cx="6" cy="6" r="5" fill="#56ac66" stroke="#f4f4f4" stroke-width="1.3"/><circle cx="6" cy="6" r="3" fill="#6cbd7a"/></svg>
<svg style="position:absolute;left:85.6px;top:288.4px;" width="12" height="12" viewBox="0 0 12 12"><circle cx="6" cy="6" r="5" fill="#56ac66" stroke="#f4f4f4" stroke-width="1.3"/><circle cx="6" cy="6" r="3" fill="#6cbd7a"/></svg>
<svg style="position:absolute;left:27.6px;top:312px;" width="8" height="12" viewBox="0 0 8 12"><polyline points="1.3,0.9 6.3,6 1.3,11.1" fill="none" stroke="#939393" stroke-width="1.3"/></svg>
<svg style="position:absolute;left:42px;top:313.7px;" width="20" height="16" viewBox="0 0 20 16"><rect x="2.8" y="0.6" width="5.6" height="3.4" rx="0.8" fill="#efbd68" stroke="#c58a2c" stroke-width="0.8"/><rect x="3.6" y="1.2" width="3.6" height="1.4" fill="#fff6dc"/><rect x="0.5" y="3.4" width="14.5" height="10.8" fill="#f7dfa2" stroke="#c08428" stroke-width="1"/><polygon points="6.8,6.6 18.6,6.6 14.2,14.4 1,14.4" fill="#f2cc7c" stroke="#b87a20" stroke-width="1"/></svg>
<svg style="position:absolute;left:27.6px;top:337px;" width="8" height="12" viewBox="0 0 8 12"><polyline points="1.3,0.9 6.3,6 1.3,11.1" fill="none" stroke="#939393" stroke-width="1.3"/></svg>
<svg style="position:absolute;left:42px;top:338.7px;" width="20" height="16" viewBox="0 0 20 16"><rect x="2.8" y="0.6" width="5.6" height="3.4" rx="0.8" fill="#efbd68" stroke="#c58a2c" stroke-width="0.8"/><rect x="3.6" y="1.2" width="3.6" height="1.4" fill="#fff6dc"/><rect x="0.5" y="3.4" width="14.5" height="10.8" fill="#f7dfa2" stroke="#c08428" stroke-width="1"/><polygon points="6.8,6.6 18.6,6.6 14.2,14.4 1,14.4" fill="#f2cc7c" stroke="#b87a20" stroke-width="1"/></svg>
<svg style="position:absolute;left:27.6px;top:362px;" width="8" height="12" viewBox="0 0 8 12"><polyline points="1.3,0.9 6.3,6 1.3,11.1" fill="none" stroke="#939393" stroke-width="1.3"/></svg>
<svg style="position:absolute;left:42px;top:363.7px;" width="20" height="16" viewBox="0 0 20 16"><rect x="2.8" y="0.6" width="5.6" height="3.4" rx="0.8" fill="#efbd68" stroke="#c58a2c" stroke-width="0.8"/><rect x="3.6" y="1.2" width="3.6" height="1.4" fill="#fff6dc"/><rect x="0.5" y="3.4" width="14.5" height="10.8" fill="#f7dfa2" stroke="#c08428" stroke-width="1"/><polygon points="6.8,6.6 18.6,6.6 14.2,14.4 1,14.4" fill="#f2cc7c" stroke="#b87a20" stroke-width="1"/></svg>
<svg style="position:absolute;left:36px;top:378px;" width="30" height="30" viewBox="0 0 30 30"><g transform="translate(14.4,15.3)"><rect x="-1.3" y="-9.4" width="2.6" height="9.4" fill="#c8c8c8" transform="rotate(0.0)"/><rect x="-1.3" y="-9.4" width="2.6" height="9.4" fill="#c8c8c8" transform="rotate(45.0)"/><rect x="-1.3" y="-9.4" width="2.6" height="9.4" fill="#c8c8c8" transform="rotate(90.0)"/><rect x="-1.3" y="-9.4" width="2.6" height="9.4" fill="#c8c8c8" transform="rotate(135.0)"/><rect x="-1.3" y="-9.4" width="2.6" height="9.4" fill="#c8c8c8" transform="rotate(180.0)"/><rect x="-1.3" y="-9.4" width="2.6" height="9.4" fill="#c8c8c8" transform="rotate(225.0)"/><rect x="-1.3" y="-9.4" width="2.6" height="9.4" fill="#c8c8c8" transform="rotate(270.0)"/><rect x="-1.3" y="-9.4" width="2.6" height="9.4" fill="#c8c8c8" transform="rotate(315.0)"/><circle r="7.0" fill="#c8c8c8"/><circle r="4.2" fill="#a4a4a4"/><circle r="2.6" fill="#3a3a3a"/></g></svg>
<svg style="position:absolute;left:45px;top:410px;" width="14" height="18" viewBox="0 0 14 18"><path d="M0.6,0.6 H9.4 L13.4,4.6 V17 H0.6 Z" fill="#f3f5f8" stroke="#c0a878" stroke-width="1"/><path d="M9.4,0.6 V4.6 H13.4" fill="#e6c488" stroke="#c0a878" stroke-width="0.8"/><rect x="2.4" y="3.6" width="8" height="1.3" fill="#4a7fc0"/><rect x="2.4" y="6.4" width="9.6" height="1.3" fill="#4a7fc0"/><rect x="2.4" y="9.0" width="9.6" height="1.3" fill="#4a7fc0"/><rect x="2.4" y="11.6" width="9.6" height="1.3" fill="#4a7fc0"/><rect x="2.4" y="13.8" width="9.6" height="1.3" fill="#4a7fc0"/></svg>
<svg style="position:absolute;left:27.6px;top:437px;" width="8" height="12" viewBox="0 0 8 12"><polyline points="1.3,0.9 6.3,6 1.3,11.1" fill="none" stroke="#939393" stroke-width="1.3"/></svg>
<svg style="position:absolute;left:41.5px;top:435px;" width="18" height="18" viewBox="0 0 18 18"><circle cx="9" cy="9" r="8.2" fill="#eef2f6" stroke="#2f6eb0" stroke-width="1.5" stroke-dasharray="2.2 1"/><text x="9" y="14.6" font-size="14" font-family="Liberation Sans" font-weight="bold" fill="#2a62a8" text-anchor="middle">?</text></svg>
<svg style="position:absolute;left:431px;top:235px;" width="20" height="20" viewBox="0 0 20 20"><rect x="3.5" y="3.6" width="14" height="15" rx="1.5" fill="#e8c07a" stroke="#c89848" stroke-width="0.8"/><rect x="5.6" y="6" width="10" height="11" fill="#f4f6fa"/><path d="M7,0.8 H13.8 L15,4.6 H6 Z" fill="#9aa6b8"/><rect x="9" y="9" width="5.4" height="1.1" fill="#4a6aa0"/><rect x="9" y="11.6" width="5.4" height="1.1" fill="#4a6aa0"/><rect x="9" y="14.2" width="5.4" height="1.1" fill="#4a6aa0"/><path d="M0.8,11.6 L4.2,14.8 L10.6,7.4" fill="none" stroke="#1a62e8" stroke-width="2.2"/></svg>
<svg style="position:absolute;left:591.3px;top:170.7px;" width="12" height="12" viewBox="0 0 12 12"><circle cx="6" cy="6" r="5.5" fill="#a7b4b8" stroke="#c4ced2" stroke-width="0.6"/><rect x="3" y="5.5" width="6" height="1.1" fill="#44504f"/><rect x="5.45" y="2.9" width="1.1" height="6.2" fill="#44504f"/></svg>
<svg style="position:absolute;left:591.3px;top:193.2px;" width="12" height="12" viewBox="0 0 12 12"><circle cx="6" cy="6" r="5.5" fill="#a7b4b8" stroke="#c4ced2" stroke-width="0.6"/><rect x="3" y="5.5" width="6" height="1.1" fill="#44504f"/></svg>
<svg style="position:absolute;left:591.3px;top:305.7px;" width="12" height="12" viewBox="0 0 12 12"><circle cx="6" cy="6" r="5.5" fill="#a7b4b8" stroke="#c4ced2" stroke-width="0.6"/><rect x="3" y="5.5" width="6" height="1.1" fill="#44504f"/></svg>
<svg style="position:absolute;left:591.3px;top:440.7px;" width="12" height="12" viewBox="0 0 12 12"><circle cx="6" cy="6" r="5.5" fill="#a7b4b8" stroke="#c4ced2" stroke-width="0.6"/><rect x="3" y="5.5" width="6" height="1.1" fill="#44504f"/><rect x="5.45" y="2.9" width="1.1" height="6.2" fill="#44504f"/></svg>
<svg style="position:absolute;left:591.3px;top:463.2px;" width="12" height="12" viewBox="0 0 12 12"><circle cx="6" cy="6" r="5.5" fill="#a7b4b8" stroke="#c4ced2" stroke-width="0.6"/><rect x="3" y="5.5" width="6" height="1.1" fill="#44504f"/></svg>
<svg style="position:absolute;left:591.3px;top:508.20000000000005px;" width="12" height="12" viewBox="0 0 12 12"><circle cx="6" cy="6" r="5.5" fill="#a7b4b8" stroke="#c4ced2" stroke-width="0.6"/><rect x="3" y="5.5" width="6" height="1.1" fill="#44504f"/></svg>
<svg style="position:absolute;left:591.3px;top:553.2px;" width="12" height="12" viewBox="0 0 12 12"><circle cx="6" cy="6" r="5.5" fill="#a7b4b8" stroke="#c4ced2" stroke-width="0.6"/><rect x="3" y="5.5" width="6" height="1.1" fill="#44504f"/></svg>
<svg style="position:absolute;left:591.3px;top:665.7px;" width="12" height="12" viewBox="0 0 12 12"><circle cx="6" cy="6" r="5.5" fill="#a7b4b8" stroke="#c4ced2" stroke-width="0.6"/><rect x="3" y="5.5" width="6" height="1.1" fill="#44504f"/></svg>

</body></html>
